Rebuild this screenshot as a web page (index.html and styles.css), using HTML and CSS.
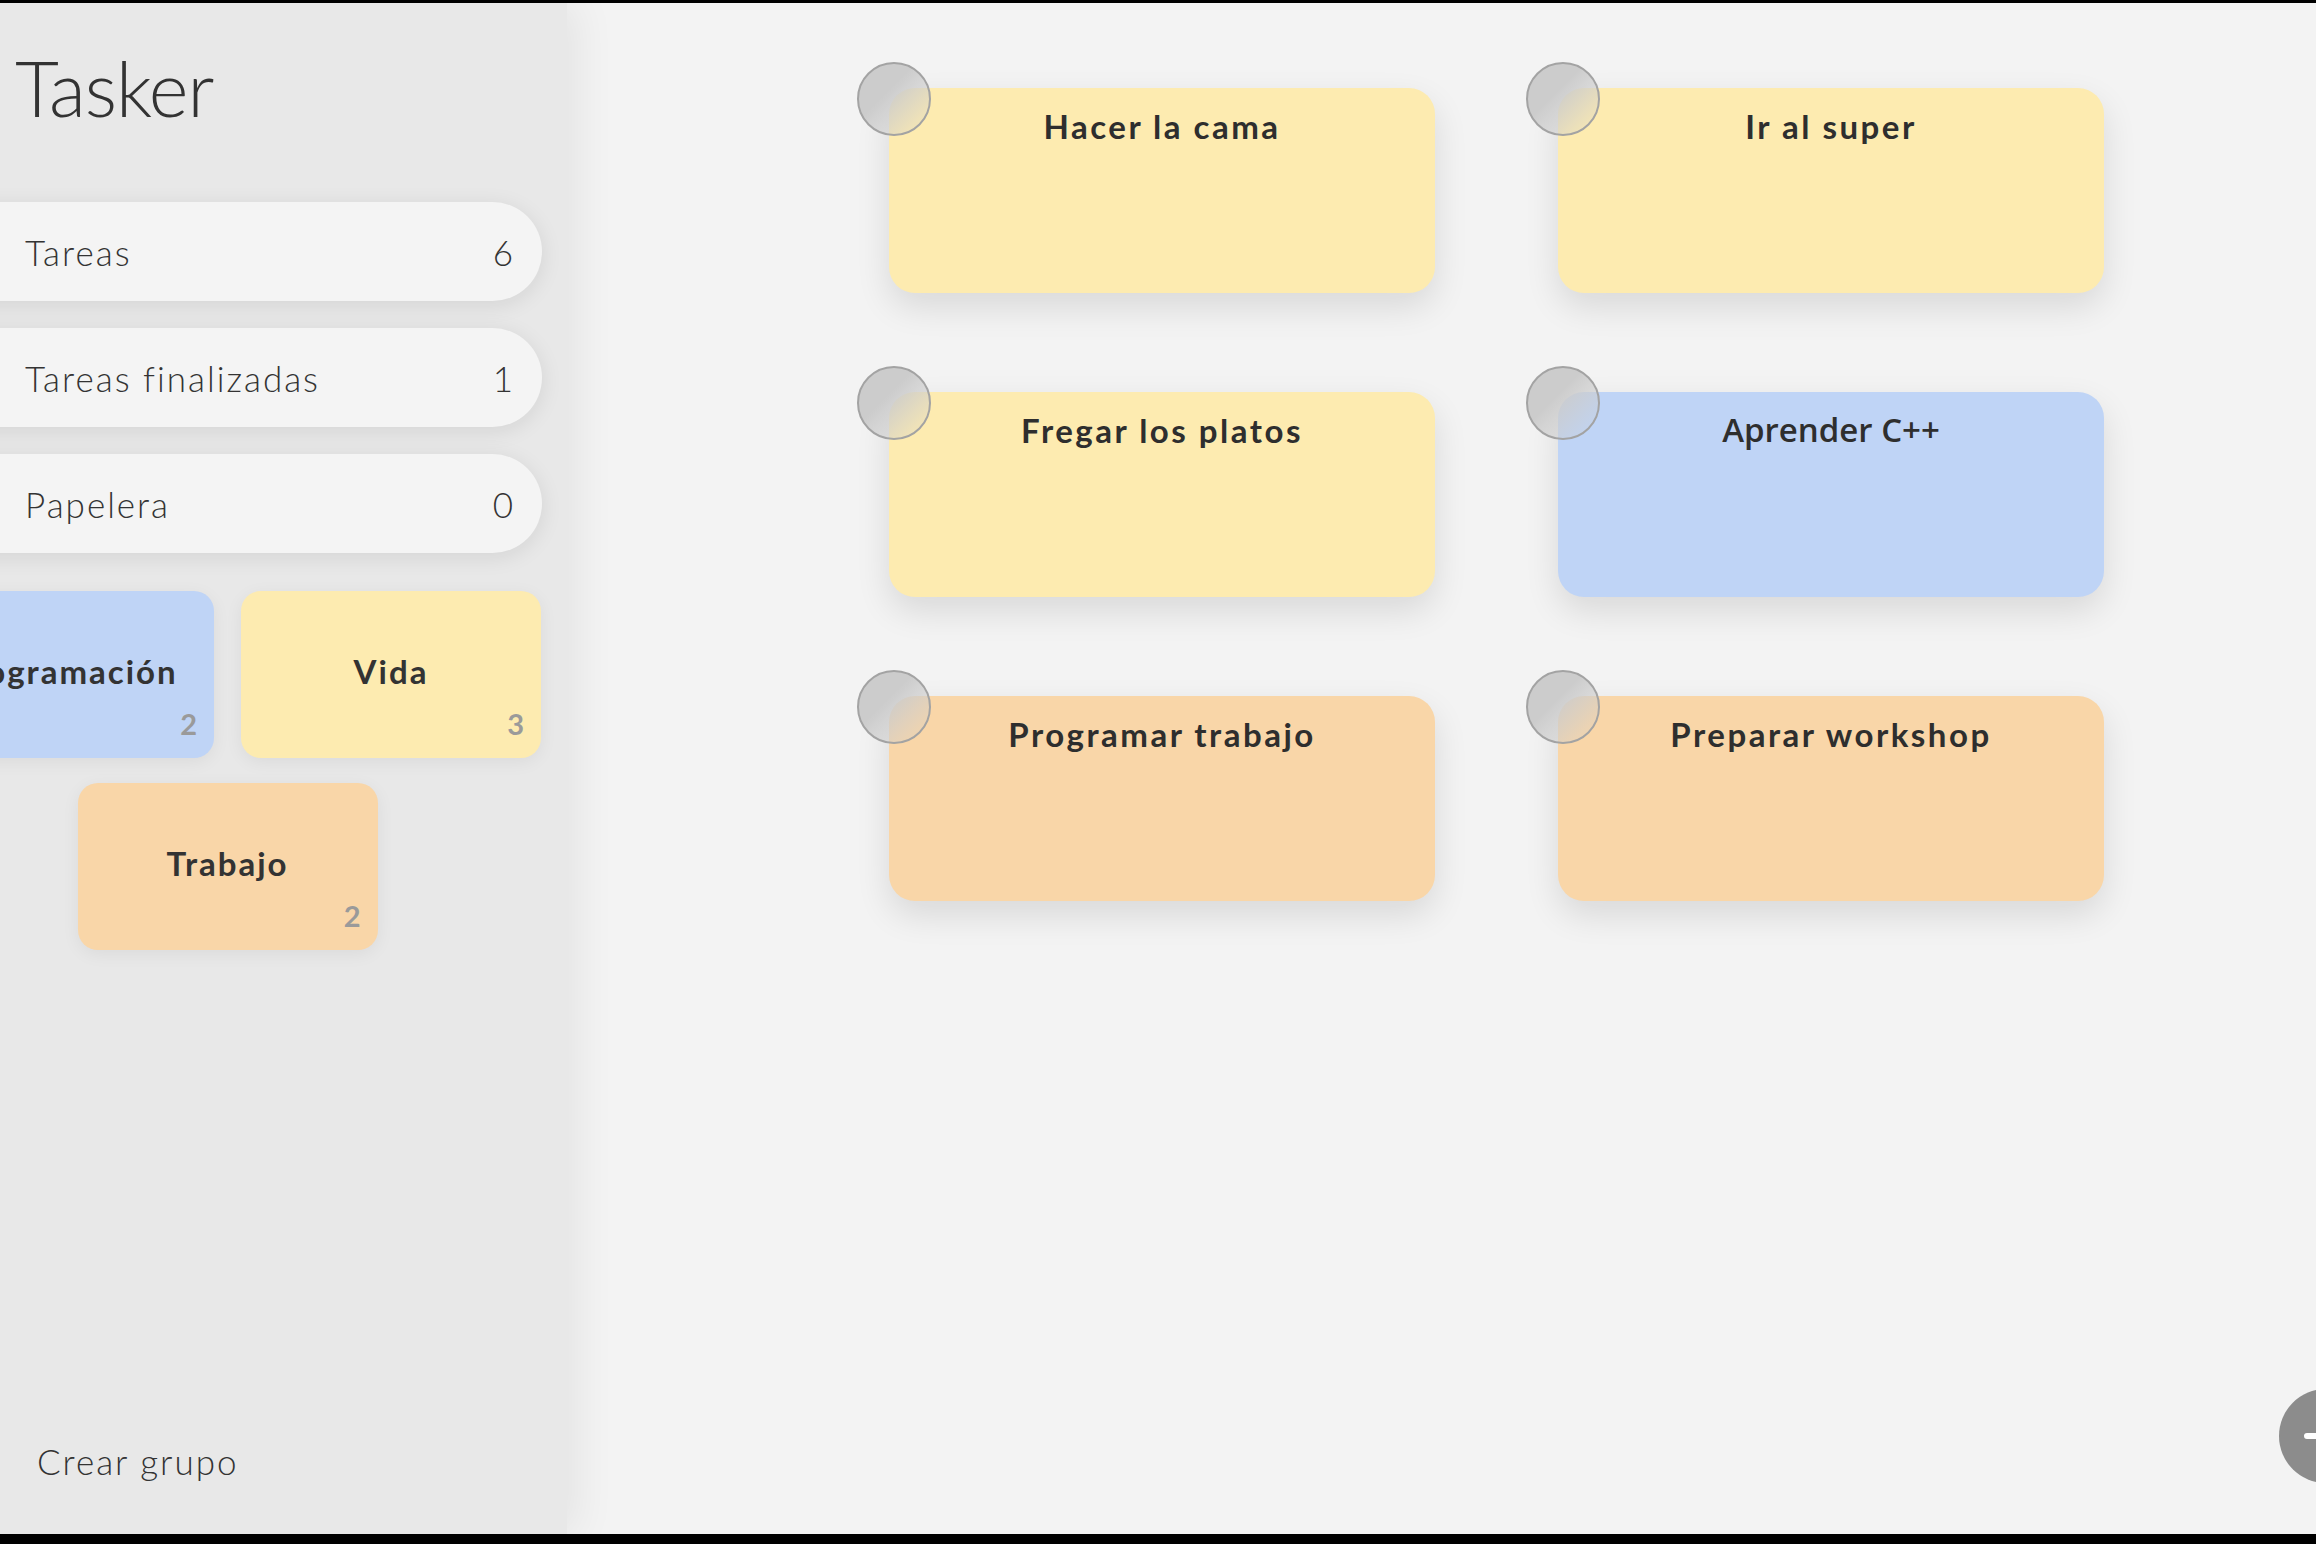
FILE: index.html
```html
<!DOCTYPE html>
<html lang="es">
<head>
  <meta charset="UTF-8">
  <meta name="viewport" content="width=device-width, initial-scale=1.0">
  <title>Tasker</title>
  <link rel="stylesheet" href="styles.css">
</head>
<body>
  <div class="app">
    <aside class="sidebar">
      <h1 class="logo">Tasker</h1>

      <nav class="menu">
        <a class="menu-item" href="#"><span>Tareas</span><span class="menu-count">6</span></a>
        <a class="menu-item" href="#"><span>Tareas finalizadas</span><span class="menu-count">1</span></a>
        <a class="menu-item" href="#"><span>Papelera</span><span class="menu-count">0</span></a>
      </nav>

      <section class="groups">
        <div class="group blue">
          <span class="group-name">Programación</span>
          <span class="group-count">2</span>
        </div>
        <div class="group yellow">
          <span class="group-name">Vida</span>
          <span class="group-count">3</span>
        </div>
        <div class="group orange">
          <span class="group-name">Trabajo</span>
          <span class="group-count">2</span>
        </div>
      </section>

      <a class="new-group" href="#">Crear grupo</a>
    </aside>

    <main class="board">
      <div class="task-grid">
        <div class="task yellow">
          <span class="task-check"></span>
          <h3 class="task-title">Hacer la cama</h3>
        </div>
        <div class="task yellow">
          <span class="task-check"></span>
          <h3 class="task-title">Ir al super</h3>
        </div>
        <div class="task yellow">
          <span class="task-check"></span>
          <h3 class="task-title">Fregar los platos</h3>
        </div>
        <div class="task blue">
          <span class="task-check"></span>
          <h3 class="task-title fallback">Aprender C++</h3>
        </div>
        <div class="task orange">
          <span class="task-check"></span>
          <h3 class="task-title">Programar trabajo</h3>
        </div>
        <div class="task orange">
          <span class="task-check"></span>
          <h3 class="task-title">Preparar workshop</h3>
        </div>
      </div>

      <!-- add task button -->
      <button class="fab" type="button" aria-label="Nueva tarea">
        <svg viewBox="0 0 94 94" width="94" height="94">
          <path d="M28 47 H66 M47 28 V66" stroke="#fff" stroke-width="6" stroke-linecap="round"/>
        </svg>
      </button>
    </main>
  </div>
</body>
</html>
```

FILE: styles.css
```css
:root {
  --sidebar-bg: #e8e8e8;
  --board-bg: #f3f3f3;
  --pill-bg: #f4f4f4;
  --text-color: #333;
  --muted: #9a9a9a;
  --yellow: #fdebb0;
  --blue: #bfd4f6;
  --orange: #f9d6a8;
}
* {
  box-sizing: border-box;
}
body {
  margin: 0;
  padding-top: 3px;
  background: #000;
  font-family: "Lato", "Noto Sans", sans-serif;
  color: var(--text-color);
  overflow: hidden;
}
a {
  color: inherit;
  text-decoration: none;
}
.app {
  display: flex;
  height: 1531px;
  overflow: hidden;
}

/* sidebar */
.sidebar {
  position: relative;
  z-index: 1;
  width: 567px;
  flex-shrink: 0;
  display: flex;
  flex-direction: column;
  background: var(--sidebar-bg);
  box-shadow: 8px 0 40px rgba(0, 0, 0, 0.07);
}
.logo {
  margin: 47px 0 0 15px;
  font-size: 76px;
  line-height: 1;
  font-weight: 300;
  letter-spacing: -1px;
}
.menu {
  display: flex;
  flex-direction: column;
  gap: 27px;
  margin: 76px 25px 0 -86px;
}
.menu-item {
  display: flex;
  align-items: center;
  justify-content: space-between;
  height: 99px;
  padding: 0 27px 0 111px;
  background: var(--pill-bg);
  border-radius: 0 50px 50px 0;
  box-shadow: 0 4px 22px rgba(0, 0, 0, 0.09);
  font-size: 35px;
  font-weight: 300;
  letter-spacing: 2px;
}
.groups {
  display: flex;
  flex-wrap: wrap;
  justify-content: center;
  gap: 25px 27px;
  margin: 38px 26px 0 -86px;
}
.group {
  position: relative;
  display: flex;
  align-items: center;
  justify-content: center;
  width: 300px;
  height: 167px;
  padding-bottom: 8px;
  border-radius: 20px;
  box-shadow: 0 4px 18px rgba(0, 0, 0, 0.06);
  font-size: 33px;
  font-weight: 700;
  letter-spacing: 2px;
}
.group-count {
  position: absolute;
  right: 17px;
  bottom: 17px;
  font-size: 29px;
  letter-spacing: 0;
  color: var(--muted);
}
.blue { background: var(--blue); }
.yellow { background: var(--yellow); }
.orange { background: var(--orange); }
.new-group {
  margin: auto 0 55px 37px;
  font-size: 35px;
  line-height: 1;
  font-weight: 300;
  letter-spacing: 2px;
}

/* board */
.board {
  position: relative;
  flex: 1;
  background: var(--board-bg);
}
.task-grid {
  display: grid;
  grid-template-columns: 546px 546px;
  grid-auto-rows: 205px;
  gap: 99px 123px;
  padding: 85px 0 0 322px;
}
.task {
  position: relative;
  border-radius: 26px;
  box-shadow: 0 14px 34px rgba(0, 0, 0, 0.11);
  padding-top: 18px;
  text-align: center;
}
.task-check {
  position: absolute;
  left: -32px;
  top: -26px;
  width: 74px;
  height: 74px;
  border-radius: 50%;
  border: 2px solid #a3a3a3;
  background: linear-gradient(135deg, rgba(204, 204, 204, 1) 40%, rgba(204, 204, 204, 0.1) 95%);
}
.task-title {
  margin: 0;
  font-size: 33px;
  line-height: 40px;
  font-weight: 700;
  letter-spacing: 2.5px;
  color: #2e2e2e;
}
.task-title.fallback {
  font-family: "Open Sans", "DejaVu Sans", sans-serif;
  font-weight: 600;
  font-size: 33px;
  letter-spacing: 0;
}
.fab {
  position: absolute;
  right: -57px;
  bottom: 51px;
  width: 94px;
  height: 94px;
  padding: 0;
  border: none;
  border-radius: 50%;
  background: #8c8c8c;
}
.fab svg {
  display: block;
}
```
